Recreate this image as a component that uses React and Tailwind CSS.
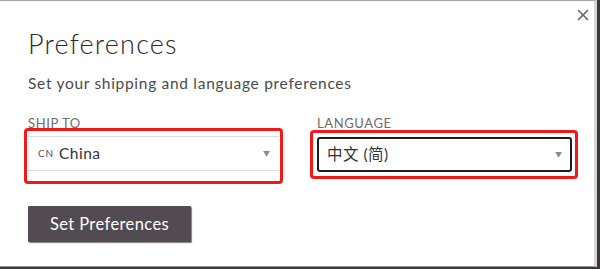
import { X } from 'lucide-react';

function Caret() {
  return <span className="text-[7px] text-[#8a8a8a] leading-none">▼</span>;
}

export default function App() {
  return (
    <div className="w-[600px] h-[269px] bg-[#3b3937] overflow-hidden" style={{ fontFamily: 'Lato, "Noto Sans CJK SC", sans-serif' }}>
      <div className="relative w-[597px] h-[267px] bg-white border-t border-[#a5a5a5] border-r-[3px] border-r-[#d6d6d6] border-b border-b-[#9a9a9a] pl-[28px]">
        <button className="absolute top-[5px] right-[2px] text-[#6a6a6a]">
          <X size={18} strokeWidth={2.3} />
        </button>

        <h1 className="mt-[27px] text-[27px] leading-[32px] font-light text-[#2a2a2a] tracking-[1.2px]">Preferences</h1>
        <p className="mt-[13px] text-[15.5px] leading-[20px] text-[#4a4a4a] tracking-[0.7px]">Set your shipping and language preferences</p>

        <div className="mt-[23px] flex gap-[27px] -ml-[4px]">
          {/* ship to */}
          <div className="w-[259px] flex flex-col">
            <span className="ml-[4px] text-[13px] leading-[14px] text-[#6c6c6c] tracking-[0.6px]">SHIP TO</span>
            <div className="mt-[-2px] h-[56px] border-[3px] border-[#f21818] rounded-[4px] pt-[5px] px-[1px]">
              <div className="h-[35px] border-y border-[#dcdcdc] flex items-center pl-[10px] pr-[9px]">
                <span className="text-[10px] text-[#555] tracking-[0.8px] mr-[5px]">CN</span>
                <span className="flex-1 text-[15.5px] text-[#333] tracking-[0.5px]">China</span>
                <Caret />
              </div>
            </div>
          </div>

          {/* language */}
          <div className="w-[268px] flex flex-col">
            <span className="ml-[7px] text-[13px] leading-[14px] text-[#6c6c6c] tracking-[0.6px]">LANGUAGE</span>
            <div className="mt-[0px] h-[49px] border-[3px] border-[#f21818] rounded-[4px] pt-[4px] pl-[4px] pr-[3px]">
              <div className="h-[35px] border-[2px] border-[#1e1e1e] rounded-[3px] flex items-center pl-[8px] pr-[8px]">
                <span className="flex-1 text-[15.5px] text-[#333] tracking-[0.5px]">中文 (简)</span>
                <Caret />
              </div>
            </div>
          </div>
        </div>

        <button className="mt-[22px] w-[163px] h-[36px] bg-[#524c52] text-white text-[16.5px] tracking-[0.4px] rounded-[1px] shadow-[1px_1px_1px_rgba(0,0,0,0.5)]">
          Set Preferences
        </button>
      </div>
    </div>
  );
}
